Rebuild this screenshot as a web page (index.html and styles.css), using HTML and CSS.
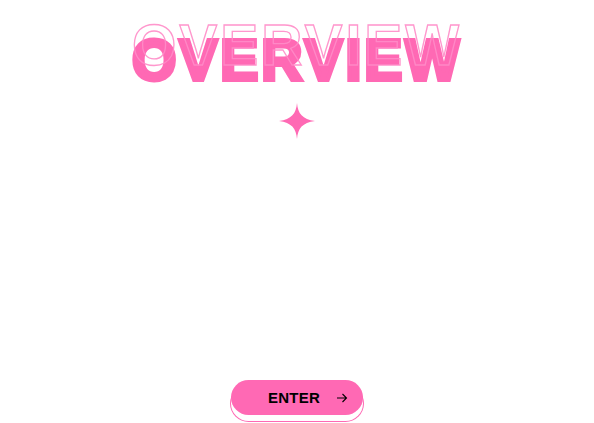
FILE: index.html
```html
<!DOCTYPE html>
<html>
<head>
<meta charset="utf-8">
<link rel="stylesheet" href="styles.css">
</head>
<body>
<main class="page">
  <div class="title">
    <h1 class="title-fill">OVERVIEW</h1>
    <span class="title-outline" aria-hidden="true">OVERVIEW</span>
  </div>
  <svg class="sparkle" viewBox="0 0 40 40" width="36" height="38">
    <path d="M20 0 C21 12 26 18 40 20 C26 22 21 28 20 40 C19 28 14 22 0 20 C14 18 19 12 20 0 Z" fill="#ff69b4"/>
  </svg>
  <div class="spacer"></div>
  <button class="enter">ENTER <svg class="arrow" viewBox="0 0 12 12" width="12" height="12"><path d="M1 6 H10.5 M6.5 2 L10.5 6 L6.5 10" fill="none" stroke="#000" stroke-width="1.1"/></svg></button>
</main>
</body>
</html>
```
FILE: styles.css
```css
html, body {
  margin: 0;
  padding: 0;
  background: #ffffff;
}
.page {
  width: 594px;
  height: 423px;
  display: flex;
  flex-direction: column;
  align-items: center;
  font-family: "Liberation Sans", Arial, sans-serif;
}
.title {
  position: relative;
  margin-top: 8px;
  height: 90px;
  width: 360px;
  display: flex;
  justify-content: center;
}
.title-fill, .title-outline {
  font-family: "Liberation Sans", Arial, sans-serif;
  font-weight: 700;
  font-size: 57px;
  line-height: 1;
  letter-spacing: 3px;
  margin: 0;
  white-space: nowrap;
}
.title-fill {
  color: #ff69b4;
  -webkit-text-stroke: 4px #ff69b4;
  margin-top: 24px;
}
.title-outline {
  position: absolute;
  left: 0;
  right: 0;
  top: 9px;
  text-align: center;
  color: transparent;
  -webkit-text-stroke: 1.3px #ff8cc8;
  opacity: 0.9;
}
.sparkle {
  margin-top: 4px;
  display: block;
}
.spacer {
  flex: 1;
}
.enter {
  width: 132px;
  height: 35px;
  margin-bottom: 8px;
  border: none;
  border-radius: 18px;
  background: #ff69b4;
  color: #000;
  font-family: "Liberation Sans", Arial, sans-serif;
  font-weight: 700;
  font-size: 15px;
  letter-spacing: 0.2px;
  display: flex;
  align-items: center;
  justify-content: center;
  gap: 16px;
  padding: 0 0 0 22px;
  box-shadow: 0 6px 0 0 #ffffff, 0 6px 0 1px #ff69b4;
}
.arrow {
  display: block;
}
```
